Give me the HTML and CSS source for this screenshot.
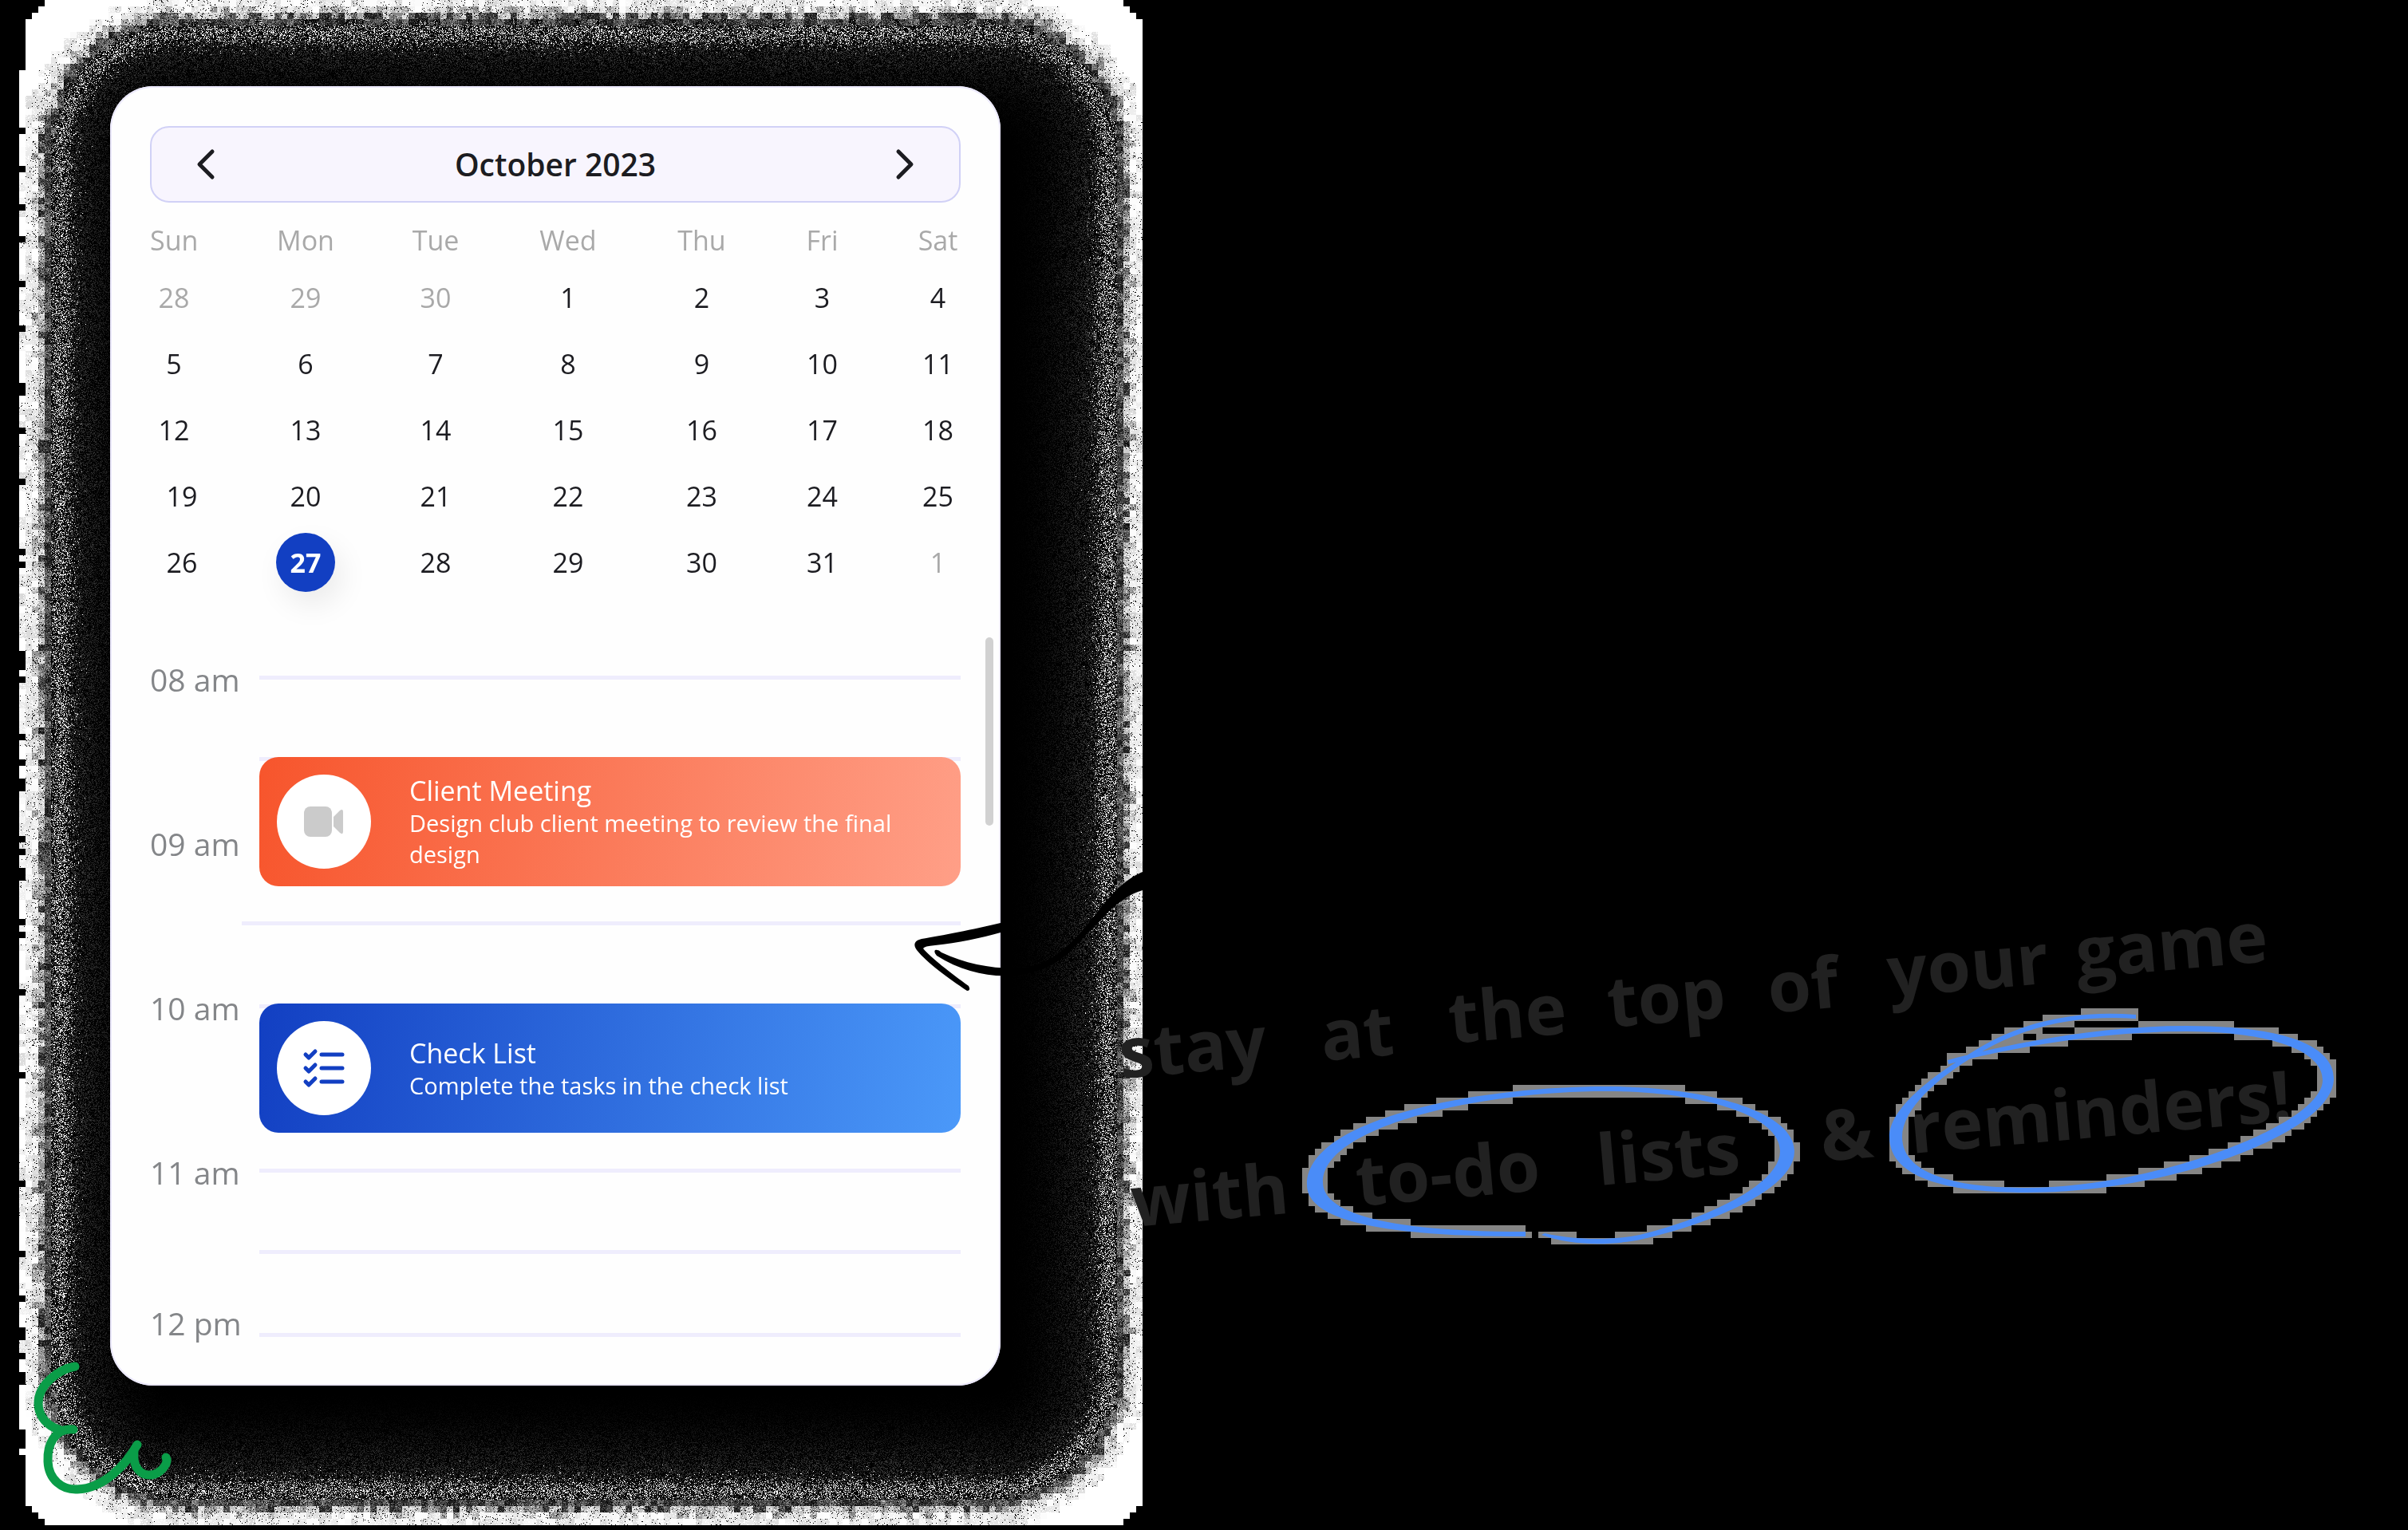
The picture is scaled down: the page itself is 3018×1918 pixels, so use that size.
FILE: index.html
```html
<!DOCTYPE html>
<html lang="en">
<head>
<meta charset="utf-8">
<meta name="viewport" content="width=device-width, initial-scale=1">
<title>October 2023</title>
<link rel="stylesheet" href="styles.css">
</head>
<body>
<main class="page">
  <canvas class="halo" id="halo" width="1432" height="1918"></canvas>
  <section class="card">
    <header class="month">
      <button class="month-nav" type="button" aria-label="Previous month">
        <svg width="24" height="40" viewBox="0 0 24 40"><path d="M20 4 L4 20 L20 36"/></svg>
      </button>
      <h1 class="month-title">October 2023</h1>
      <button class="month-nav" type="button" aria-label="Next month">
        <svg width="24" height="40" viewBox="0 0 24 40"><path d="M4 4 L20 20 L4 36"/></svg>
      </button>
    </header>

    <table class="days">
      <colgroup><col class="c-sun"><col class="c-mon"><col class="c-tue"><col class="c-wed"><col class="c-thu"><col class="c-fri"><col class="c-sat"></colgroup>
      <thead>
        <tr><th>Sun</th><th>Mon</th><th>Tue</th><th>Wed</th><th>Thu</th><th>Fri</th><th>Sat</th></tr>
      </thead>
      <tbody>
        <tr><td class="muted">28</td><td class="muted">29</td><td class="muted">30</td><td>1</td><td>2</td><td>3</td><td>4</td></tr>
        <tr><td>5</td><td>6</td><td>7</td><td>8</td><td>9</td><td>10</td><td>11</td></tr>
        <tr><td>12</td><td>13</td><td>14</td><td>15</td><td>16</td><td>17</td><td>18</td></tr>
        <tr class="inset"><td>19</td><td>20</td><td>21</td><td>22</td><td>23</td><td>24</td><td>25</td></tr>
        <tr class="inset"><td>26</td><td><button class="selected" type="button" aria-pressed="true">27</button></td><td>28</td><td>29</td><td>30</td><td>31</td><td class="muted">1</td></tr>
      </tbody>
    </table>

    <ol class="timeline">
      <li class="hour">
        <span class="hour-label">08 am</span>
        <div class="slots">
          <article class="event event-meeting">
            <span class="event-icon">
              <svg width="52" height="40" viewBox="0 0 52 40"><rect x="1" y="1" width="35" height="38" rx="8" fill="#cbcbcb"/><path d="M38 14 L46 6 Q50 3 50 8 V32 Q50 37 46 34 L38 26 Z" fill="#cbcbcb"/></svg>
            </span>
            <div class="event-text">
              <h2>Client Meeting</h2>
              <p>Design club client meeting to review the final design</p>
            </div>
          </article>
        </div>
      </li>
      <li class="hour">
        <span class="hour-label">09 am</span>
        <div class="slots slots-wide"></div>
      </li>
      <li class="hour">
        <span class="hour-label">10 am</span>
        <div class="slots">
          <article class="event event-list">
            <span class="event-icon">
              <svg width="54" height="50" viewBox="0 0 54 50" fill="none" stroke="#123fc2" stroke-width="5" stroke-linecap="round" stroke-linejoin="round"><path d="M24 8 H50 M24 25 H50 M24 42 H50"/><path d="M4 8 L8 12 L16 4 M4 25 L8 29 L16 21 M4 42 L8 46 L16 38"/></svg>
            </span>
            <div class="event-text">
              <h2>Check List</h2>
              <p>Complete the tasks in the check list</p>
            </div>
          </article>
        </div>
      </li>
      <li class="hour">
        <span class="hour-label">11 am</span>
        <div class="slots"></div>
      </li>
      <li class="hour hour-last">
        <span class="hour-label">12 pm</span>
        <div class="slots"></div>
      </li>
    </ol>
    <span class="scroll-thumb"></span>
  </section>

  <svg class="notes" viewBox="0 0 3018 1918" preserveAspectRatio="xMinYMin meet">
    <g class="handwriting">
      <text transform="translate(1405 1352) rotate(-5)">stay</text>
      <text transform="translate(1658 1330) rotate(-5)">at</text>
      <text transform="translate(1818 1308) rotate(-5)">the</text>
      <text transform="translate(2017 1288) rotate(-5)">top</text>
      <text transform="translate(2218 1270) rotate(-5)">of</text>
      <text transform="translate(2368 1250) rotate(-5)">your</text>
      <text transform="translate(2604 1226) rotate(-5)">game</text>
      <text transform="translate(1420 1538) rotate(-5)">with</text>
      <text transform="translate(1702 1512) rotate(-5)">to-do</text>
      <text transform="translate(2004 1486) rotate(-5)">lists</text>
      <text transform="translate(2284 1456) rotate(-5)">&amp;</text>
      <text transform="translate(2396 1446) rotate(-5)">reminders!</text>
    </g>
    <g id="blocks" fill="#858585" shape-rendering="crispEdges"></g>
    <g fill="#4a8cf8">
      <path class="ring" d="M1932 1548 C1970 1562 2020 1562 2060 1553 C2150 1532 2249 1490 2249 1443 C2249 1394 2140 1362 2012 1362 C1860 1362 1638 1400 1638 1485 C1638 1532 1740 1550 1912 1550 L1912 1544 C1750 1544 1658 1524 1658 1482 C1658 1410 1860 1368 2012 1368 C2130 1368 2231 1397 2231 1443 C2231 1485 2140 1527 2055 1548 C2020 1555 1975 1555 1936 1546 Z"/>
      <path class="ring" d="M2677 1272 C2600 1266 2530 1281 2470 1320 C2420 1350 2368 1390 2368 1425 C2368 1480 2450 1495 2540 1495 C2720 1495 2925 1420 2925 1352 C2925 1310 2860 1286 2740 1286 C2640 1286 2530 1305 2441 1329 L2442 1334 C2530 1311 2640 1293 2740 1293 C2840 1293 2911 1315 2911 1354 C2911 1410 2700 1489 2540 1489 C2460 1489 2384 1475 2384 1425 C2384 1390 2430 1350 2476 1323 C2535 1287 2600 1272 2677 1277 Z"/>
    </g>
    <g fill="#000">
      <path d="M1254 1157 C1220 1165 1180 1173 1155 1177 C1146 1179 1144 1184 1149 1191 C1162 1207 1188 1226 1212 1242 Q1217 1242 1214 1236 C1192 1220 1166 1200 1157 1189 Q1158 1186 1172 1185 C1200 1182 1230 1176 1254 1169 Z"/>
      <path d="M1172 1191 Q1176 1190 1180 1194 C1210 1208 1240 1214 1275 1214 C1330 1212 1360 1160 1390 1125 Q1412 1101 1432 1093 V1116 C1400 1124 1370 1165 1338 1196 C1300 1230 1230 1234 1174 1198 Q1170 1194 1172 1191 Z"/>
    </g>
    <g class="logo">
      <path d="M94 1713 C75 1716 48 1735 48 1759 C48 1776 60 1788 74 1792"/>
      <path d="M92 1792 C68 1790 59 1812 60 1832 C61 1855 78 1868 97 1867 C130 1866 158 1836 172 1811"/>
      <path d="M168 1820 C166 1842 178 1850 190 1849 C202 1847 212 1834 208 1827"/>
    </g>
  </svg>
</main>
<script src="texture.js"></script>
</body>
</html>
```
FILE: styles.css
```css
* { box-sizing: border-box; }

body {
  margin: 0;
  background: #000;
  color: #1c1c21;
  font-family: "Open Sans", "Noto Sans", sans-serif;
}

.page {
  position: relative;
  min-height: 100vh;
  padding: 108px 138px 160px;
  overflow: hidden;
}

.halo {
  position: absolute;
  top: 0;
  left: 0;
}

.card {
  position: relative;
  max-width: 1116px;
  padding: 50px;
  padding-bottom: 0;
  border-radius: 54px;
  background: #fefefe;
  box-shadow: inset 0 0 0 2px #ece9fd;
}

.month {
  display: flex;
  align-items: center;
  justify-content: space-between;
  height: 96px;
  padding: 0 48px;
  border: 2px solid #d1d1f6;
  border-radius: 24px;
  background: #f8f5fe;
}

.month-title {
  margin: 0;
  font-size: 39px;
  font-weight: 600;
  line-height: 48px;
}

.month-nav {
  display: flex;
  padding: 0 8px;
  border: 0;
  background: none;
}

.month-nav svg {
  fill: none;
  stroke: #1c1c21;
  stroke-width: 5;
  stroke-linecap: round;
  stroke-linejoin: round;
}

.days {
  width: 100%;
  margin-top: 17px;
  border-collapse: collapse;
  table-layout: fixed;
  font-size: 34px;
  line-height: 48px;
  text-align: center;
}

.c-sun { width: 111px; }
.c-mon { width: 168px; }
.c-tue { width: 158px; }
.c-wed { width: 174px; }
.c-thu { width: 161px; }
.c-fri { width: 141px; }
.c-sat { width: 103px; }

.days th {
  height: 60px;
  padding: 0;
  color: #a9a9a9;
  font-weight: 400;
}

.days td {
  height: 83px;
  padding: 0;
}

.days th:first-child,
.days td:first-child { padding-right: 51px; }

.days .inset td:first-child { padding-right: 31px; }

.days th:last-child,
.days td:last-child { padding-left: 46px; }

.days .muted { color: #a9a9a9; }

.selected {
  display: block;
  width: 74px;
  height: 74px;
  margin: 0 auto;
  padding: 0;
  border: 0;
  border-radius: 50%;
  background: #123fc2;
  box-shadow: 8px 16px 36px rgba(0, 0, 0, 0.08);
  color: #fff;
  font: inherit;
  font-weight: 700;
}

.timeline {
  margin: 101px 0 0;
  padding: 0;
  list-style: none;
}

.hour {
  display: grid;
  grid-template-columns: 137px 1fr;
  height: 206px;
}

.hour-label {
  margin-top: -19px;
  color: #848689;
  font-size: 39px;
  line-height: 48px;
  white-space: nowrap;
}

.slots {
  position: relative;
  border-top: 5px solid #efedfd;
}

.slots::after {
  content: "";
  display: block;
  height: 97px;
  border-bottom: 5px solid #efedfd;
  box-sizing: content-box;
}

.slots-wide::after { margin-left: -22px; }

.hour-last { height: 66px; }
.hour-last .hour-label { margin-top: -36px; }
.hour-last .slots::after { display: none; }

.event {
  position: absolute;
  z-index: 1;
  left: 0;
  right: 0;
  display: flex;
  align-items: center;
  gap: 48px;
  height: 162px;
  padding: 0 22px;
  border-radius: 24px;
  color: #fff;
}

.event-meeting {
  top: 97px;
  background: linear-gradient(100deg, #f7552c, #ff9f87);
}

.event-list {
  top: -6px;
  background: linear-gradient(100deg, #123fc2, #4b99f9);
}

.event-icon {
  display: grid;
  place-items: center;
  flex: none;
  width: 118px;
  height: 118px;
  border-radius: 50%;
  background: #fff;
}

.event h2 {
  margin: 0;
  font-size: 34px;
  font-weight: 400;
  line-height: 42px;
}

.event p {
  margin: 0;
  font-size: 29px;
  line-height: 39px;
}

.scroll-thumb {
  position: absolute;
  top: 691px;
  right: 9px;
  width: 10px;
  height: 236px;
  border-radius: 5px;
  background: #d1d1d1;
}

.notes {
  position: absolute;
  top: 0;
  left: 0;
  width: 100%;
  pointer-events: none;
}

.handwriting {
  fill: #212121;
  font-family: "Open Sans", sans-serif;
  font-size: 88px;
  font-weight: 700;
}

.logo {
  fill: none;
  stroke: #0a9d48;
  stroke-width: 11;
  stroke-linecap: round;
  stroke-linejoin: round;
}
```
FILE: texture.js
```js
// Small seeded generator so the grain is the same on every load.
let seed = 20231027;
function rand() {
  seed = (seed * 1664525 + 1013904223) >>> 0;
  return seed / 4294967296;
}

// Grainy shadow around the card, built from 8px cells with 1px dither.
function drawHalo(canvas) {
  const w = canvas.width, h = canvas.height, cell = 8;
  const ctx = canvas.getContext('2d');
  const img = ctx.createImageData(w, h);
  const cx = 732, cy = 955, hw = 508, hh = 765, r = 50;
  const dist = (x, y) => {
    const dx = Math.max(Math.abs(x - cx) - hw, 0);
    const dy = Math.max(Math.abs(y - cy) - hh, 0);
    return Math.hypot(dx, dy) - r;
  };
  const inside = (x, y) => {
    const dx = Math.max(Math.abs(x - 732) - 652, 0);
    const dy = Math.max(Math.abs(y - 956) - 908, 0);
    return Math.hypot(dx, dy) <= 50;
  };
  for (let by = 0; by < h; by += cell) {
    for (let bx = 0; bx < w; bx += cell) {
      const x0 = bx + 4, y0 = by + 4;
      let out = !inside(x0, y0);
      if (bx === 24 && by > 80 && by < 1820) out = rand() < 0.15;
      if (bx === 24 && (by <= 80 || by >= 1820)) out = true;
      const s = dist(x0, y0) + (rand() - 0.5) * 8;
      let tone = 0;
      if (s > 146) tone = 255;
      else if (s > 128) tone = 215 + rand() * 40;
      else if (s > 120) tone = 130 + rand() * 90;
      else if (s > 110) tone = 30 + rand() * 80;
      for (let y = by; y < Math.min(by + cell, h); y++) {
        for (let x = bx; x < Math.min(bx + cell, w); x++) {
          const d = dist(x, y);
          let v = 0;
          if (!out) {
            const n = rand();
            if (tone > 0) {
              v = tone;
              if (tone < 250 && n < (150 - s) / 300) v = 0;
              else if (tone < 250 && n > 0.84) v = Math.min(255, v + 80);
            } else {
              const peak = Math.exp(-Math.pow((d - 99) / 14, 2));
              if (n < 0.27 * peak) v = 255;
              else if (n < 0.55 && d > -30) v = Math.pow(Math.min(d + 30, 125) / 125, 1.9) * 105 * rand();
            }
          }
          const i = (y * w + x) * 4;
          img.data[i] = img.data[i + 1] = img.data[i + 2] = v;
          img.data[i + 3] = 255;
        }
      }
    }
  }
  ctx.putImageData(img, 0, 0);
}

// Coarse grey cells along the edge of each pen ring.
function drawBlocks(group) {
  const cells = new Set();
  document.querySelectorAll('.ring').forEach((ring) => {
    const len = ring.getTotalLength();
    for (let l = 0; l < len; l += 2) {
      const p = ring.getPointAtLength(l);
      cells.add(Math.floor(p.x / 8) + ',' + Math.floor(p.y / 8));
    }
  });
  cells.forEach((key) => {
    const [x, y] = key.split(',').map(Number);
    const rect = document.createElementNS('http://www.w3.org/2000/svg', 'rect');
    rect.setAttribute('x', x * 8);
    rect.setAttribute('y', y * 8);
    rect.setAttribute('width', 8);
    rect.setAttribute('height', 8);
    group.appendChild(rect);
  });
}

drawHalo(document.getElementById('halo'));
drawBlocks(document.getElementById('blocks'));
```
